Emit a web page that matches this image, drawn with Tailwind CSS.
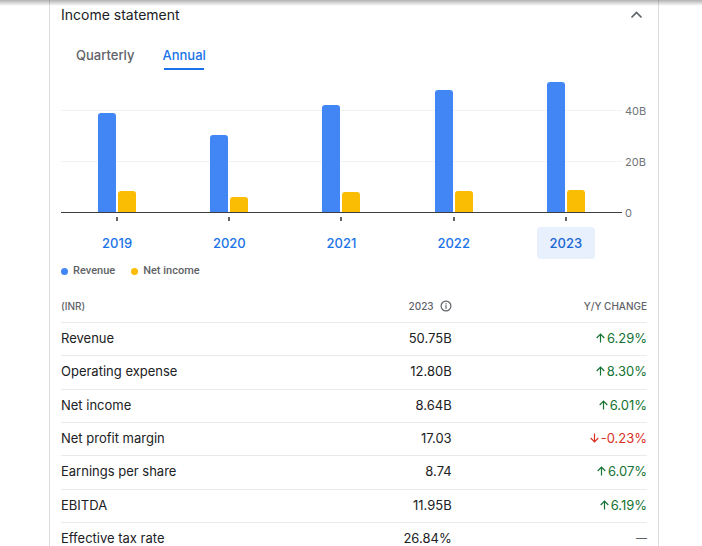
<!DOCTYPE html>
<html lang="en">
<head>
<meta charset="utf-8">
<meta name="viewport" content="width=device-width, initial-scale=1">
<title>Income statement</title>
<script src="https://cdn.jsdelivr.net/npm/@tailwindcss/browser@4"></script>
</head>
<body class="relative h-screen overflow-hidden bg-white font-['Inter','Liberation_Sans',sans-serif] text-[13px] leading-5 text-[#202124]">
<div class="pointer-events-none absolute inset-x-0 top-0 h-[6px] bg-linear-to-b from-black/30 to-transparent"></div>
<main class="mr-[43px] ml-[49px] min-h-screen border-x border-[#dadce0] px-[11px] pt-[5px]">
  <header class="flex items-center justify-between">
    <h2 class="text-[14px]">Income statement</h2>
    <button type="button" aria-label="Collapse" class="flex size-5 items-center justify-center text-[#5f6368]">
      <svg viewBox="0 0 20 20" class="size-5" fill="none" stroke="currentColor" stroke-width="1.7"><path d="M4.5 12.5 9.5 7.5 14.5 12.5"/></svg>
    </button>
  </header>

  <div role="tablist" class="mt-5 flex gap-7 pl-[15px] font-medium">
    <button type="button" role="tab" aria-selected="false" class="h-[25px] pb-[5px] text-[#5f6368]">Quarterly</button>
    <button type="button" role="tab" aria-selected="true" class="relative h-[25px] pb-[5px] text-[#1a73e8]">Annual<span class="absolute inset-x-[2px] bottom-0 h-[2px] bg-[#1a73e8]"></span></button>
  </div>

  <section aria-label="Annual chart" class="mt-[11px] grid grid-cols-[1fr_25px]">
    <div class="relative h-[132px] border-b border-[#3c4043]">
      <div class="absolute inset-x-0 bottom-[101px] h-px bg-[#f1f3f4]"></div>
      <div class="absolute inset-x-0 bottom-[50px] h-px bg-[#f1f3f4]"></div>
      <div class="relative grid h-full grid-cols-5">
        <div class="flex items-end justify-center gap-[2px]"><i class="w-[18px] rounded-t-[3px] bg-[#4285f4]" style="height:99px"></i><i class="w-[18px] rounded-t-[3px] bg-[#fbbc04]" style="height:21px"></i></div>
        <div class="flex items-end justify-center gap-[2px]"><i class="w-[18px] rounded-t-[3px] bg-[#4285f4]" style="height:77px"></i><i class="w-[18px] rounded-t-[3px] bg-[#fbbc04]" style="height:15px"></i></div>
        <div class="flex items-end justify-center gap-[2px]"><i class="w-[18px] rounded-t-[3px] bg-[#4285f4]" style="height:107px"></i><i class="w-[18px] rounded-t-[3px] bg-[#fbbc04]" style="height:20px"></i></div>
        <div class="flex items-end justify-center gap-[2px]"><i class="w-[18px] rounded-t-[3px] bg-[#4285f4]" style="height:122px"></i><i class="w-[18px] rounded-t-[3px] bg-[#fbbc04]" style="height:21px"></i></div>
        <div class="flex items-end justify-center gap-[2px]"><i class="w-[18px] rounded-t-[3px] bg-[#4285f4]" style="height:130px"></i><i class="w-[18px] rounded-t-[3px] bg-[#fbbc04]" style="height:22px"></i></div>
      </div>
    </div>
    <div class="-mb-2 flex flex-col justify-end gap-[35px] pl-[3px] text-[11px] leading-4 text-[#70757a]"><span>40B</span><span>20B</span><span>0</span></div>
    <div class="grid grid-cols-5 pt-1 font-medium text-[#1a73e8]">
      <div class="flex flex-col items-center gap-[6px]"><i class="h-1 w-[2px] bg-[#5f6368]"></i><button type="button" class="h-8 w-[58px] rounded">2019</button></div>
      <div class="flex flex-col items-center gap-[6px]"><i class="h-1 w-[2px] bg-[#5f6368]"></i><button type="button" class="h-8 w-[58px] rounded">2020</button></div>
      <div class="flex flex-col items-center gap-[6px]"><i class="h-1 w-[2px] bg-[#5f6368]"></i><button type="button" class="h-8 w-[58px] rounded">2021</button></div>
      <div class="flex flex-col items-center gap-[6px]"><i class="h-1 w-[2px] bg-[#5f6368]"></i><button type="button" class="h-8 w-[58px] rounded">2022</button></div>
      <div class="flex flex-col items-center gap-[6px]"><i class="h-1 w-[2px] bg-[#5f6368]"></i><button type="button" aria-pressed="true" class="h-8 w-[58px] rounded bg-[#e8f0fe] text-[#1967d2]">2023</button></div>
    </div>
  </section>

  <ul class="mt-1 flex gap-4 font-[Roboto,'Liberation_Sans',sans-serif] text-[11px] leading-4 font-medium text-[#5f6368]">
    <li class="flex items-center gap-[5px]"><i class="size-[7px] rounded-full bg-[#4285f4]"></i>Revenue</li>
    <li class="flex items-center gap-[5px]"><i class="size-[7px] rounded-full bg-[#fbbc04]"></i>Net income</li>
  </ul>

  <table class="mt-[11px] w-full table-fixed border-collapse">
    <thead class="text-[10px] leading-4 font-medium text-[#5f6368]">
      <tr class="h-8 border-b border-[#e8eaed]">
        <th scope="col" class="p-0 text-left font-medium">(INR)</th>
        <th scope="col" class="p-0 text-right font-medium"><span class="flex items-center justify-end gap-[6px]">2023 <svg viewBox="0 0 12 12" class="size-3" fill="none" stroke="currentColor" stroke-width="1.2" role="img" aria-label="Fiscal year information"><circle cx="6" cy="6" r="4.9"/><path d="M6 5.3V8.8M6 3.2V4.4"/></svg></span></th>
        <th scope="col" class="p-0 text-right font-medium">Y/Y CHANGE</th>
      </tr>
    </thead>
    <tbody class="[&_td]:px-0 [&_td]:pt-0 [&_td]:pb-[2px] [&_td]:text-right [&_th]:px-0 [&_th]:pt-0 [&_th]:pb-[2px] [&_th]:text-left [&_th]:font-normal [&_tr]:h-[33px] [&_tr]:border-b [&_tr]:border-[#e8eaed] [&_tr:nth-child(3n+2)]:h-[34px]">
      <tr><th scope="row">Revenue</th><td>50.75B</td><td><span class="flex items-center justify-end gap-[2px] text-[#137333]"><svg viewBox="0 0 9 10" class="h-[10px] w-[9px]" fill="none" stroke="currentColor" stroke-width="1.2"><path d="M4.5 9.5V1.3M.7 5 4.5 1.2 8.3 5"/></svg>6.29%</span></td></tr>
      <tr><th scope="row">Operating expense</th><td>12.80B</td><td><span class="flex items-center justify-end gap-[2px] text-[#137333]"><svg viewBox="0 0 9 10" class="h-[10px] w-[9px]" fill="none" stroke="currentColor" stroke-width="1.2"><path d="M4.5 9.5V1.3M.7 5 4.5 1.2 8.3 5"/></svg>8.30%</span></td></tr>
      <tr><th scope="row">Net income</th><td>8.64B</td><td><span class="flex items-center justify-end gap-[2px] text-[#137333]"><svg viewBox="0 0 9 10" class="h-[10px] w-[9px]" fill="none" stroke="currentColor" stroke-width="1.2"><path d="M4.5 9.5V1.3M.7 5 4.5 1.2 8.3 5"/></svg>6.01%</span></td></tr>
      <tr><th scope="row">Net profit margin</th><td>17.03</td><td><span class="flex items-center justify-end gap-[2px] text-[#d93025]"><svg viewBox="0 0 9 10" class="h-[10px] w-[9px]" fill="none" stroke="currentColor" stroke-width="1.2"><path d="M4.5.5V8.7M.7 5 4.5 8.8 8.3 5"/></svg>-0.23%</span></td></tr>
      <tr><th scope="row">Earnings per share</th><td>8.74</td><td><span class="flex items-center justify-end gap-[2px] text-[#137333]"><svg viewBox="0 0 9 10" class="h-[10px] w-[9px]" fill="none" stroke="currentColor" stroke-width="1.2"><path d="M4.5 9.5V1.3M.7 5 4.5 1.2 8.3 5"/></svg>6.07%</span></td></tr>
      <tr><th scope="row">EBITDA</th><td>11.95B</td><td><span class="flex items-center justify-end gap-[2px] text-[#137333]"><svg viewBox="0 0 9 10" class="h-[10px] w-[9px]" fill="none" stroke="currentColor" stroke-width="1.2"><path d="M4.5 9.5V1.3M.7 5 4.5 1.2 8.3 5"/></svg>6.19%</span></td></tr>
      <tr><th scope="row">Effective tax rate</th><td>26.84%</td><td class="text-[11px] text-[#5f6368]">—</td></tr>
    </tbody>
  </table>
</main>
</body>
</html>
